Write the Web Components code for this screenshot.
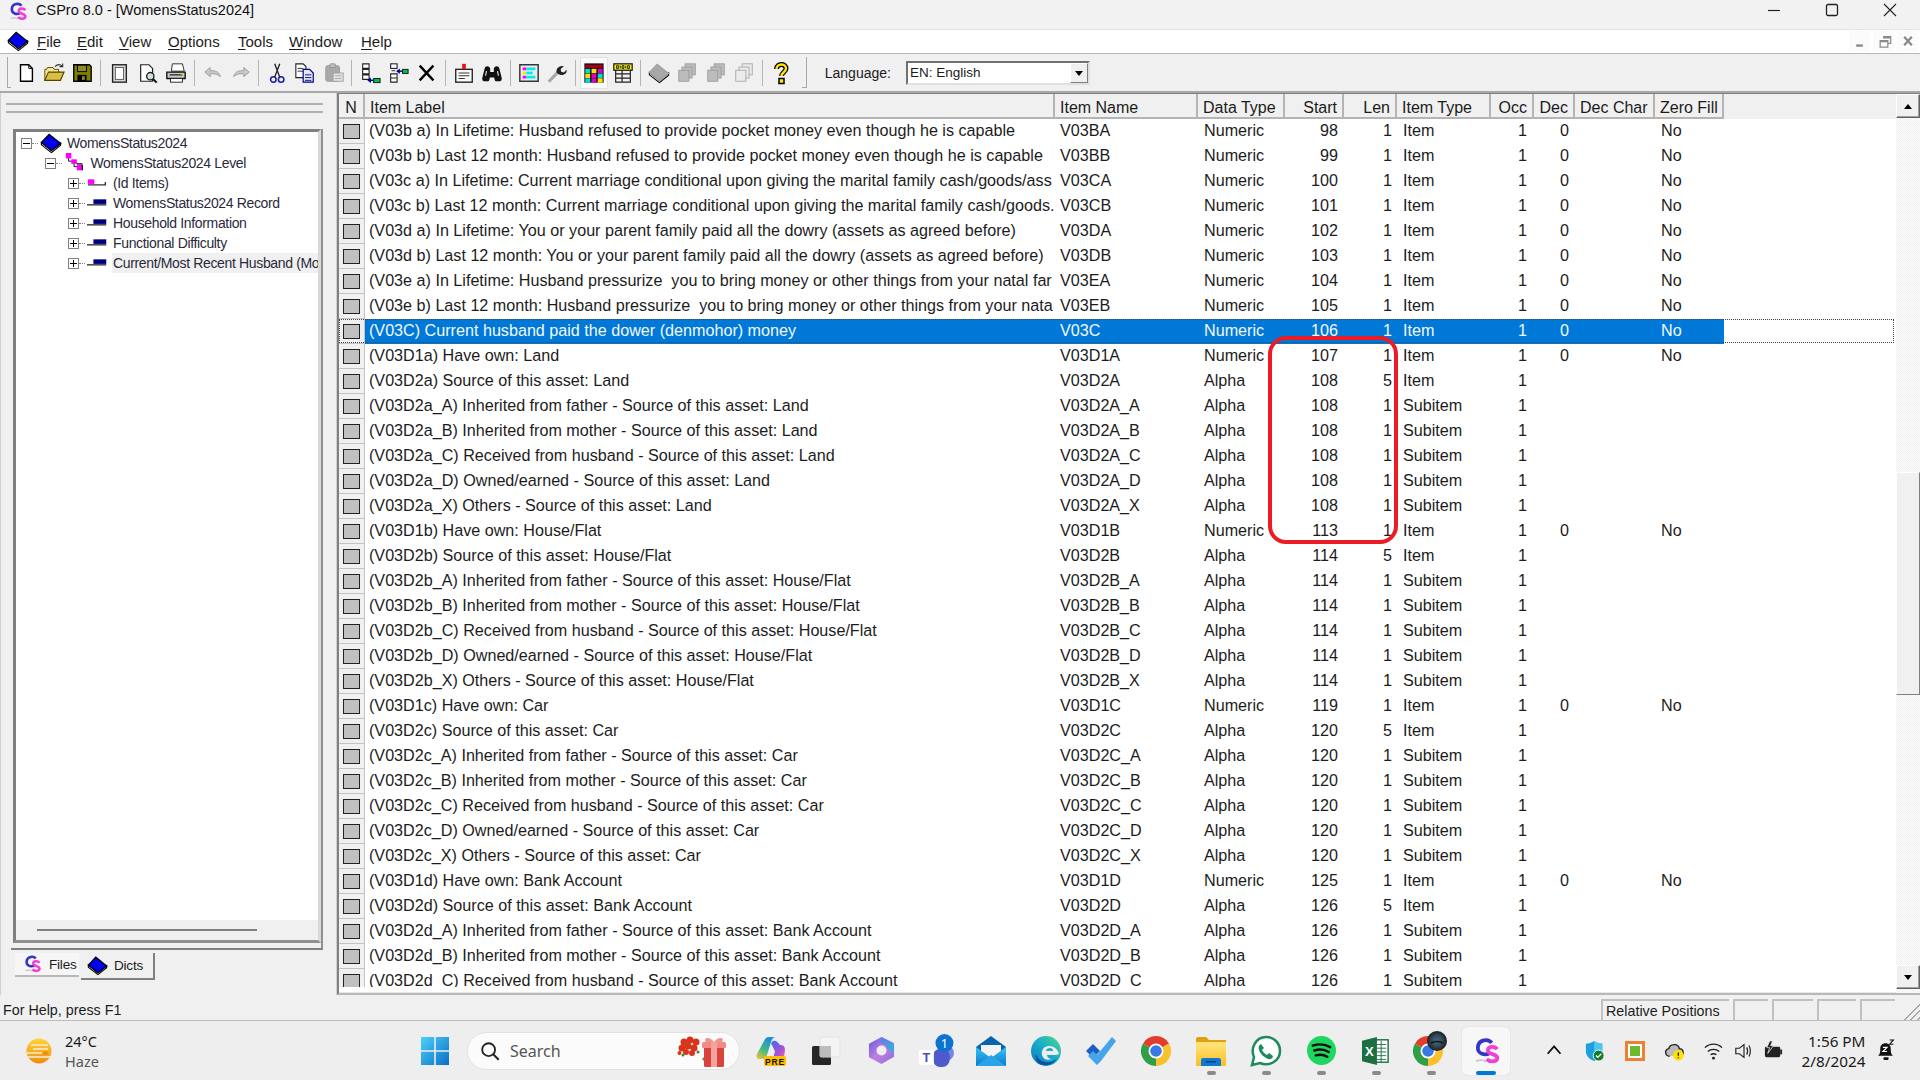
<!DOCTYPE html>
<html>
<head>
<meta charset="utf-8">
<title>CSPro 8.0</title>
<style>
html,body{margin:0;height:100%;overflow:hidden}
body{width:1920px;height:1080px;display:flex;flex-direction:column;background:#f0f0f0;font-family:"Liberation Sans",Arial,sans-serif;color:#1c1c1c}
</style>
</head>
<body>
<title-bar></title-bar>
<menu-bar></menu-bar>
<tool-bar></tool-bar>
<main-area>
  <side-panel></side-panel>
  <dict-grid></dict-grid>
</main-area>
<status-bar></status-bar>
<task-bar></task-bar>

<script>
const BOOK=(a,b,c)=>`<path d="M1.5 11.5v2.5l11 8.5 10-8v-2.5l-10 8z" fill="${c}" stroke="#000" stroke-width="1.2"/><path d="M1.5 11.5L10 2.5l12.5 10-10 8z" fill="${a}" stroke="${b}" stroke-width="1.4"/>`;
const STACK=(f,s)=>`<rect x="10" y="2" width="11" height="12" fill="${f}" stroke="${s}"/><rect x="6.500" y="5.500" width="11" height="12" fill="${f}" stroke="${s}"/><rect x="3" y="9" width="11" height="12" fill="${f}" stroke="${s}"/>`;
const CELL=(x,y,c)=>`<rect x="${x}" y="${y}" width="5.300" height="4.700" fill="${c}"/>`;
const CHROME=`<path d="M15 15L2 7.500A15 15 0 0 1 28 7.500z" fill="#e33b2e"/><path d="M15 15L28 7.500A15 15 0 0 1 15 30z" fill="#fbc02d"/><path d="M15 15L15 30A15 15 0 0 1 2 7.500z" fill="#2f9e44"/><circle cx="15" cy="15" r="7.500" fill="#fff"/><circle cx="15" cy="15" r="5.800" fill="#3b78e7"/>`;
const CSLOGO=`<path d="M16.500 5.500C14 2 6 2.500 5.500 9c-.4 5.500 6 7 9.500 4.500" fill="none" stroke="#3535c8" stroke-width="3"/><path d="M21 10.500c-2-2.500-7.500-2.500-7.500 1 0 3.500 7.500 2.500 7.500 6 0 3.500-6 3.500-8.500 1" fill="none" stroke="#f040d8" stroke-width="3"/><path d="M4 20c3-1 6-1 8 .5" fill="none" stroke="#c8c8c8" stroke-width="1.500"/>`;

const ICONS={
 book:BOOK('#0000f0','#000','#fff'),
 cslogo:CSLOGO,
 level:`<path d="M5 4v6h6v6h6" fill="none" stroke="#000"/><rect x="2" y="1" width="6" height="6" fill="#f0f"/><rect x="8" y="8" width="6" height="5" fill="#f0f"/><rect x="14" y="14" width="6" height="6" fill="#f0f"/><path d="M14 13h6M20 14v6" stroke="#000" stroke-width="1.200"/>`,
 idrec:`<rect x="1" y="8" width="7" height="5" fill="#f0f"/><path d="M1 14h19v-3" fill="none" stroke="#333" stroke-width="1.500"/>`,
 rec:`<rect x="7" y="8" width="14" height="5" fill="#000080"/><path d="M0 14h21" stroke="#333" stroke-width="1.500"/>`,
 new:`<path d="M6 3h9l4 4v14H6z" fill="#fff" stroke="#000" stroke-width="1.500"/><path d="M15 3v4h4" fill="none" stroke="#000"/>`,
 open:`<path d="M2 20V8h2l1-2h6l1 2h5v3" fill="#f6e890" stroke="#554400"/><path d="M2 20l4-9h17l-4 9z" fill="#d8c040" stroke="#554400" stroke-width="1.200"/><path d="M13 5q4-4 8-.5M21.500 1.500v3.500h-3.500" fill="none" stroke="#333" stroke-width="1.200"/>`,
 save:`<path d="M3 3h17l2 2v16H3z" fill="#808000" stroke="#000" stroke-width="1.500"/><rect x="7" y="3.500" width="10" height="7" fill="#8c8c20" stroke="#000"/><rect x="7" y="14" width="10" height="7" fill="#000"/><rect x="12" y="15.500" width="3" height="4" fill="#8c8c20"/>`,
 page:`<rect x="5" y="3" width="15" height="19" fill="#d8d8d8" stroke="#222" stroke-width="1.500"/><rect x="8" y="6" width="9" height="13" fill="#fff" stroke="#555"/>`,
 preview:`<path d="M4 3h9l4 4v14H4z" fill="#fff" stroke="#222" stroke-width="1.300"/><circle cx="14.500" cy="15.500" r="4" fill="#cfe0e0" stroke="#222" stroke-width="1.500"/><path d="M17.500 18.500l4 4" stroke="#111" stroke-width="2.200"/>`,
 print:`<path d="M8 2h11l2 8H7z" fill="#fff" stroke="#222"/><path d="M2 11h20v7H2z" fill="#c8c8c8" stroke="#111" stroke-width="1.500"/><path d="M5 14h14" stroke="#333" stroke-width="1.500"/><rect x="6" y="18" width="13" height="4" fill="#fff" stroke="#222"/><rect x="17" y="12" width="3" height="1.500" fill="#ee0"/>`,
 undo:`<path d="M3 11l6-5v3.500c5-.5 10 1 11 6.500-3-3-7-3.500-11-3v3z" fill="#c8c8c8" stroke="#9c9c9c"/>`,
 redo:`<path d="M21 11l-6-5v3.500c-5-.5-10 1-11 6.500 3-3 7-3.500 11-3v3z" fill="#c8c8c8" stroke="#9c9c9c"/>`,
 cut:`<circle cx="8" cy="19" r="3" fill="none" stroke="#1c1ca8" stroke-width="1.700"/><circle cx="16.500" cy="19" r="3" fill="none" stroke="#1c1ca8" stroke-width="1.700"/><path d="M9.500 16.500L15 2M15 16.500L9.500 2" stroke="#222" stroke-width="1.500"/>`,
 copy:`<path d="M2 2h8l3 3v12H2z" fill="#fff" stroke="#222" stroke-width="1.200"/><path d="M4 7h6M4 10h6" stroke="#222"/><path d="M10 8h7l4 4v10H10z" fill="#e4e8f8" stroke="#00008a" stroke-width="1.300"/><path d="M12 14h7M12 17h7M12 20h7" stroke="#00008a"/>`,
 paste:`<rect x="3" y="4" width="15" height="17" rx="2" fill="#a8a8a8" stroke="#989898"/><rect x="7.500" y="2" width="6" height="4" rx="1" fill="#c0c0c0" stroke="#909090"/><rect x="11" y="12" width="11" height="9" fill="#e2e2e2" stroke="#a0a0a0"/><path d="M13 15h7M13 18h7" stroke="#aaa"/>`,
 addafter:`<path d="M4 2h7v5H4zM4 8h7v5H4zM4 14h7v5H4z" fill="#fff" stroke="#222" stroke-width="1.200"/><path d="M17 20h-7" stroke="#0000a0" stroke-width="1.600"/><path d="M13 17v6l-4-3z" fill="#0000a0"/><rect x="16" y="18" width="7" height="4.500" fill="#00c050" stroke="#111"/>`,
 addbefore:`<rect x="4" y="2" width="7" height="5" fill="#fff" stroke="#222" stroke-width="1.200"/><path d="M4 13h7v4.500H4zM4 17.500h7V22H4z" fill="#fff" stroke="#222" stroke-width="1.200"/><path d="M5 9.500h4" stroke="#222"/><path d="M11 10h8" stroke="#0000a0" stroke-width="1.600"/><path d="M14 7v6l-4-3z" fill="#0000a0"/><rect x="17" y="8" width="6" height="4.500" fill="#00c050" stroke="#111"/>`,
 del:`<path d="M4 4l15 16M19 4L4 20" stroke="#000" stroke-width="2.600"/>`,
 note:`<rect x="3" y="8" width="18" height="14" fill="#fff" stroke="#222" stroke-width="1.500"/><rect x="10" y="2" width="4" height="6" fill="#e81010"/><path d="M6 12h12M6 15h12M6 18h7" stroke="#222"/>`,
 find:`<path d="M3 21c-2-1-2-3-1-6l2-8c.5-3 5-3 6 0v4h4V7c1-3 5.500-3 6 0l2 8c1 3 1 5-1 6h-5c-1-.5-1.500-2-1.500-4h-5c0 2-.5 3.500-1.500 4z" fill="#111"/><path d="M5 15l1-5M18 10l1 5" stroke="#eee" stroke-width="1.200"/>`,
 fields:`<rect x="2" y="3" width="20" height="18" fill="#ececec" stroke="#333" stroke-width="1.600"/><rect x="5" y="6" width="4" height="3" fill="#f0f"/><rect x="9" y="6" width="10" height="3" fill="#0ee"/><rect x="5" y="10.500" width="4" height="3" fill="#ee0"/><rect x="9" y="10.500" width="7" height="3" fill="#0ee"/><rect x="5" y="15" width="4" height="3" fill="#f0f"/><rect x="9" y="15" width="10" height="3" fill="#0ee"/>`,
 wrench:`<path d="M3 21.500L13 11" stroke="#a8a8a8" stroke-width="3.400"/><path d="M12 12c-2-4 2-9 7.500-7.500l-3.500 3 .5 3 3 1 3-3c1 5-5.500 8-10.500 3.500z" fill="#222"/>`,
 sheet:`<rect x="1.500" y="1.500" width="21" height="21" fill="#111"/><rect x="2.500" y="3" width="19" height="3.500" fill="#a00018"/>`+CELL(2.5,7.5,'#00dcdc')+CELL(9.3,7.5,'#ffe000')+CELL(16.1,7.5,'#e000c0')+CELL(2.5,12.7,'#ffe000')+CELL(9.3,12.7,'#e000c0')+CELL(16.1,12.7,'#00dcdc')+CELL(2.5,17.8,'#00dcdc')+CELL(9.3,17.8,'#e000c0')+CELL(16.1,17.8,'#ffe000'),
 table:`<rect x="2" y="2" width="20" height="7" fill="#f4f020" stroke="#111" stroke-width="1.300"/><path d="M5 4h2v3H5zM11 4h2v3h-2zM17 4h2v3h-2z" fill="none" stroke="#111"/><path d="M9 4v3M15 4v3" stroke="#111"/><path d="M4 9v13h16V9M4 13h16M4 17.500h16M11 9v13" fill="none" stroke="#222" stroke-width="1.300"/>`,
 graybook:BOOK('#a8a8a8','#a0a0a0','#e8e8e8'),
 graystack:STACK('#bcbcbc','#9c9c9c'),
 linestack:STACK('#ececec','#a8a8a8'),
 help:`<path d="M7.500 8c0-6 9.500-6 9.500-.5 0 3.500-4.500 4-4.500 7.500" fill="none" stroke="#000" stroke-width="5"/><path d="M7.500 8c0-6 9.500-6 9.500-.5 0 3.500-4.500 4-4.500 7.500" fill="none" stroke="#ffe600" stroke-width="2.400"/><rect x="10" y="17.500" width="5" height="5" fill="#ffe600" stroke="#000" stroke-width="1.500"/>`,
 mdimin:`<rect x="6" y="14" width="7" height="2.500" fill="#8a8a8a"/>`,
 mdirest:`<path d="M9 6h8v7h-3M6 10h8v7H6z" fill="none" stroke="#8a8a8a" stroke-width="1.300"/><path d="M9 7h8M6 11h8" stroke="#8a8a8a" stroke-width="1.500"/>`,
 mdiclose:`<path d="M6 6l8 9M14 6l-8 9" stroke="#8a8a8a" stroke-width="2.400"/>`,
 weather:`<defs><linearGradient id="g" x1="0" y1="0" x2="0" y2="1"><stop offset="0" stop-color="#ffd33a"/><stop offset="1" stop-color="#f28a10"/></linearGradient></defs><circle cx="15" cy="15" r="12.500" fill="url(#g)"/><path d="M1 17h17M4 21h22M7 9h17M9 13h15" stroke="#f7dfa8" stroke-width="2"/><rect x="19" y="15.500" width="5" height="3" rx="1.500" fill="#e88b10"/>`,
 windows:`<defs><linearGradient id="g" x1="0" y1="0" x2="1" y2="1"><stop offset="0" stop-color="#4dd0f7"/><stop offset="1" stop-color="#0a6fc8"/></linearGradient></defs><path d="M1 1h13.200v13.200H1zM15.800 1H29v13.200H15.800zM1 15.800h13.200V29H1zM15.800 15.800H29V29H15.800z" fill="url(#g)"/>`,
 search:`<circle cx="10.500" cy="10.500" r="7" fill="none" stroke="#222" stroke-width="2"/><path d="M15.500 15.500l6 6" stroke="#222" stroke-width="2.200"/>`,
 gift:`<path d="M26 24l5 5" stroke="#5a9a3a" stroke-width="3"/><g fill="#d8341c"><circle cx="7" cy="8" r="3.500"/><circle cx="13" cy="6" r="3.500"/><circle cx="19" cy="8" r="3.500"/><circle cx="5" cy="14" r="3.500"/><circle cx="11" cy="12" r="3.500"/><circle cx="17" cy="14" r="3.500"/><circle cx="9" cy="18" r="3"/><circle cx="15" cy="19" r="3"/><circle cx="2.500" cy="19" r="2"/></g><g fill="#3f8a2e"><circle cx="21" cy="18" r="1.500"/><circle cx="6" cy="21" r="1.500"/></g><rect x="27" y="11" width="20" height="22" rx="1.500" fill="#d8443c"/><rect x="25" y="8" width="24" height="6" rx="1.500" fill="#f08c84"/><rect x="34" y="8" width="6" height="25" fill="#f4a49c"/><path d="M37 8c-6-7-11-3-8 0zM37 8c6-7 11-3 8 0z" fill="#f0948c"/>`,
 copilot:`<defs><linearGradient id="a" x1="0" y1="1" x2=".5" y2="0"><stop offset="0" stop-color="#f4c430"/><stop offset=".5" stop-color="#42b883"/><stop offset="1" stop-color="#1a8fe0"/></linearGradient><linearGradient id="b" x1="0" y1="0" x2="1" y2="1"><stop offset="0" stop-color="#2878f0"/><stop offset=".6" stop-color="#a650d8"/><stop offset="1" stop-color="#f070a0"/></linearGradient></defs><path d="M8 5c1-2 2-4 5-4h7c-3 0-4 2-5 5l-4 13c-1 3-3 4-5 4H3c-2 0-3-2-2-5z" fill="url(#a)"/><path d="M15 8c1-3 2-4 5-3 2 1 3 3 4 4 3 0 5 1 5 5l-1 7c-1 2-3 3-5 3H13c3 0 4-2 5-5l1-4c-1-1-2-5-4-7z" fill="url(#b)"/><rect x="8" y="20" width="22" height="10" rx="2" fill="#ffc000"/><text x="19" y="28.500" text-anchor="middle" font-family="Liberation Sans,sans-serif" font-weight="700" font-size="8.500" letter-spacing=".8" fill="#111">PRE</text>`,
 taskview:`<rect x="1" y="10" width="19" height="19" rx="1.500" fill="#262626"/><rect x="9" y="1" width="20" height="20" rx="1.500" fill="#f4f4f4" stroke="#e2e2e2"/><rect x="9" y="10" width="11" height="11" fill="#bdbdbd"/>`,
 m365:`<defs><linearGradient id="a" x1="0" y1="0" x2="1" y2="1"><stop offset="0" stop-color="#5a5be0"/><stop offset=".5" stop-color="#c080e0"/><stop offset="1" stop-color="#8a6ce0"/></linearGradient><linearGradient id="b" x1="0" y1="0" x2="1" y2="1"><stop offset="0" stop-color="#6a78e8"/><stop offset="1" stop-color="#38b0e0"/></linearGradient></defs><path d="M14 1L27 7.500v14L14 29 1 22V8z" fill="url(#a)"/><path d="M14 1l13 6.500v10l-7-4-1-3.500-7-4z" fill="url(#b)"/><circle cx="14" cy="15" r="5.200" fill="#eee"/>`,
 teams:`<circle cx="26" cy="17" r="7" fill="#7b83eb"/><rect x="13" y="13" width="16" height="17" rx="7" fill="#5059c9"/><rect x="0" y="14" width="14" height="14" fill="#fff"/><text x="7" y="25" text-anchor="middle" font-family="Liberation Sans,sans-serif" font-weight="700" font-size="12" fill="#4a50b8">T</text><circle cx="24" cy="7.500" r="8.500" fill="#0c74d0"/><text x="24" y="12" text-anchor="middle" font-family="Noto Sans,sans-serif" font-size="12" fill="#fff">1</text>`,
 mail:`<defs><linearGradient id="a" x1="0" y1="0" x2="0" y2="1"><stop offset="0" stop-color="#36c4f4"/><stop offset="1" stop-color="#0f78d0"/></linearGradient></defs><path d="M15 0L30 11v19H0V11z" fill="#0a63b0"/><path d="M5 9h20v8l-10 7-10-7z" fill="#f3f3f3"/><path d="M0 11l15 11 15-11v19H0z" fill="url(#a)"/><path d="M0 30l15-11 15 11z" fill="#2aa4e8"/>`,
 edge:`<defs><linearGradient id="a" x1="0" y1="1" x2="1" y2="0"><stop offset="0" stop-color="#0c78c8"/><stop offset=".55" stop-color="#1ab0c8"/><stop offset="1" stop-color="#52d888"/></linearGradient></defs><circle cx="15" cy="15" r="15" fill="url(#a)"/><path d="M26 22c-3 6-9 8-14 7-6-1-8-5-7-11 2 6 8 9 13 8 3 0 6-2 8-4z" fill="#0c53a0"/><path d="M11 19c-1-5 2-9 7-9 5 0 8 3 10 7 0 2-3 2-8 2h-4c0 2 2 4 5 4-5 2-9 0-10-4z" fill="#eee"/><path d="M15 15c0-2 2-3 4-3 2 0 3 1 3 3z" fill="#27a6c6"/>`,
 todo:`<path d="M0 15l7-7 7 7-7 7z" fill="#1b5ec4"/><path d="M11 29L2 20l5-5 4 4L26 1l4 4-15 20z" fill="#45a4ec"/>`,
 chrome:CHROME,
 folder:`<path d="M0 3c0-1 1-2 2-2h8l3 3h17v6H0z" fill="#e0a010"/><defs><linearGradient id="a" x1="0" y1="0" x2="0" y2="1"><stop offset="0" stop-color="#ffe680"/><stop offset="1" stop-color="#fbbe20"/></linearGradient></defs><rect x="0" y="6" width="30" height="24" rx="1" fill="url(#a)"/><path d="M5 30v-6c0-1 1-2 2-2h16c1 0 2 1 2 2v6z" fill="#0f78d0"/><rect x="10" y="25" width="10" height="1.500" fill="#063e78"/>`,
 whatsapp:`<path d="M1 29l2-8C-1 12 5 1 15 1c8 0 14 6 14 14 0 10-11 16-20 12z" fill="#fff" stroke="#1f8a5c" stroke-width="2.500"/><path d="M10 8c-2 1-3 3-2 6 2 5 5 7 9 9 3 1 5-1 5-3l-4-3-2 2c-2-1-4-3-5-5l2-2z" fill="#1f8a5c"/>`,
 spotify:`<circle cx="15" cy="15" r="15" fill="#1ed760"/><path d="M6 10c6-2 13-1.500 18 1.500M7.500 15c5-1.500 11-1 15 1.500M9 20c4-1 9-.5 12 1.500" fill="none" stroke="#111" stroke-width="2.500" stroke-linecap="round"/>`,
 excel:`<rect x="12" y="3" width="16" height="24" fill="#fff" stroke="#1d6f42" stroke-width="1.500"/><path d="M16 8h10M16 12h10M16 16h10M16 20h10M16 24h10M20.500 4v23" stroke="#1d6f42"/><path d="M0 4l16-4v30L0 26z" fill="#1d6f42"/><text x="8" y="20" text-anchor="middle" font-family="Liberation Sans,sans-serif" font-weight="700" font-size="14" fill="#fff">X</text>`,
 chromeavatar:CHROME+`<defs><radialGradient id="a"><stop offset="0" stop-color="#3f6f86"/><stop offset=".55" stop-color="#334b58"/><stop offset="1" stop-color="#1c1c1c"/></radialGradient></defs><circle cx="24" cy="5" r="10" fill="url(#a)"/><path d="M18 7q6-3 12 0" stroke="#111" stroke-width="1.500" fill="none"/>`,
 up:`<path d="M4 15l7-8 7 8" fill="none" stroke="#111" stroke-width="2"/>`,
 shield:`<path d="M10 1c3 2 6 3 9 3v8c0 6-4 9-9 11-5-2-9-5-9-11V4c3 0 6-1 9-3z" fill="#18a0e0"/><path d="M10 1c3 2 6 3 9 3v8H10z" fill="#4cc4f0"/><circle cx="15" cy="17" r="6" fill="#107c30" stroke="#fff"/><path d="M12 17l2 2 4-4" fill="none" stroke="#fff" stroke-width="1.500"/>`,
 square:`<rect x="1.500" y="1.500" width="17" height="17" fill="#fff" stroke="#f08030" stroke-width="3"/><rect x="5" y="5" width="10" height="10" fill="#70b82c"/>`,
 cloud:`<path d="M6 17c-5 0-6-7-1-8 1-5 10-6 11 0 3 0 4 2 4 4v2" fill="#bbb" stroke="#222" stroke-width="1.500"/><circle cx="15" cy="16" r="5.500" fill="#ffe000"/><path d="M15 13v3.500M15 18v1" stroke="#111" stroke-width="1.300"/>`,
 wifi:`<path d="M2 8c5-5 13-5 18 0M5 12c3-3 9-3 12 0M8 15.500c2-1.500 4-1.500 6 0" fill="none" stroke="#222" stroke-width="1.400"/><circle cx="11" cy="19" r="1.500" fill="#222"/>`,
 speaker:`<path d="M2 9h4l5-4v14l-5-4H2z" fill="none" stroke="#222" stroke-width="1.300"/><path d="M14 8q2 4 0 8M16.500 6q3 6 0 12" fill="none" stroke="#222" stroke-width="1.300"/>`,
 battery:`<rect x="2" y="7" width="16" height="11" rx="1.500" fill="#222"/><rect x="18" y="10" width="2" height="5" fill="#222"/><path d="M7 1L4 8h3l-2 6 6-8H8l2-5z" fill="#222" stroke="#eee" stroke-width=".8"/>`,
 bell:`<path d="M3 16c2-2 2-4 2-7 0-3 2-5 5-5s5 2 5 5c0 3 0 5 2 7z" fill="#111"/><rect x="8" y="17.500" width="5" height="2.500" rx="1" fill="#111"/><path d="M7.500 8h4l-4 4h4" fill="none" stroke="#fff" stroke-width="1.100"/><path d="M14 1h3.500l-3.500 4h3.500" fill="none" stroke="#111" stroke-width="1.100"/>`
};
const BOXES={gift:'0 0 52 34',copilot:'0 0 30 30',windows:'0 0 30 30',weather:'0 0 30 30',taskview:'0 0 30 30',m365:'0 0 28 30',teams:'0 0 33 30',mail:'0 0 30 30',edge:'0 0 30 30',todo:'0 0 30 30',chrome:'0 0 30 30',chromeavatar:'0 0 36 30',folder:'0 0 30 30',whatsapp:'0 0 30 30',spotify:'0 0 30 30',excel:'0 0 30 30',mdimin:'0 0 20 22',mdirest:'0 0 20 22',mdiclose:'0 0 20 22',shield:'0 0 22 24',square:'0 0 20 20',cloud:'0 0 22 22',wifi:'0 0 22 22',speaker:'0 0 22 24',battery:'0 0 22 22',bell:'0 0 20 22',cslogo:'0 0 24 24'};

class AppIcon extends HTMLElement{
    connectedCallback(){
        const n=this.getAttribute('name'), w=this.getAttribute('size')||24, h=this.getAttribute('height')||w;
        this.attachShadow({mode:'open'}).innerHTML=`<style>:host{display:inline-flex;flex:none}svg{display:block;overflow:visible}</style>
        <svg width="${w}" height="${h}" viewBox="${BOXES[n]||'0 0 24 24'}">${ICONS[n]}</svg>`;
    }
}
customElements.define('app-icon',AppIcon);

class TitleBar extends HTMLElement{
    connectedCallback(){
        this.attachShadow({mode:'open'}).innerHTML=`<style>
        :host{display:flex;align-items:flex-start;height:29px;flex:none;box-sizing:border-box;background:#f2f2f2;padding:1px 0 0 7px;font-size:14.500px}
        span{margin:1px 0 0 8px;white-space:pre;color:#111}
        .ctl{margin-left:auto;display:flex}
        .b{width:58px;height:18px;display:flex;align-items:center;justify-content:center}
        svg{display:block}
        </style>
        <app-icon name="cslogo" size="21"></app-icon><span>CSPro 8.0 - [WomensStatus2024]</span>
        <div class="ctl" style="padding-right:1px">
          <div class="b"><svg width="14" height="14"><path d="M1 7.500h12" stroke="#222" stroke-width="1.200"/></svg></div>
          <div class="b"><svg width="14" height="14"><rect x="1.500" y="1.500" width="11" height="11" rx="1.500" fill="none" stroke="#222" stroke-width="1.300"/></svg></div>
          <div class="b"><svg width="14" height="14"><path d="M1 1l12 12M13 1L1 13" stroke="#222" stroke-width="1.100"/></svg></div>
        </div>`;
    }
}
customElements.define('title-bar',TitleBar);

class MenuBar extends HTMLElement{
    connectedCallback(){
        const items=[['F','ile',40],['E','dit',42],['V','iew',49],['O','ptions',70],['T','ools',51],['W','indow',72],['H','elp',40]];
        this.attachShadow({mode:'open'}).innerHTML=`<style>
        :host{display:flex;align-items:center;height:25px;flex:none;background:#fff;border-top:1px solid #e4e4e4;border-bottom:1px solid #b8b8b8;box-sizing:border-box;padding:0 0 1px 7px;font-size:15px}
        u{text-decoration-thickness:1px;text-underline-offset:2px}
        .m{display:flex;margin-left:8px}
        .m span{white-space:nowrap}
        .mdi{margin-left:auto;display:flex;gap:3px;padding-right:2px}
        .mdi div{width:21px;height:21px;background:#fbfbfb;display:flex;align-items:center;justify-content:center}
        </style>
        <app-icon name="book" size="22"></app-icon>
        <div class="m">${items.map(i=>`<span style="width:${i[2]}px"><u>${i[0]}</u>${i[1]}</span>`).join('')}</div>
        <div class="mdi"><div><app-icon name="mdimin" size="20" height="21"></app-icon></div><div><app-icon name="mdirest" size="20" height="21"></app-icon></div><div><app-icon name="mdiclose" size="20" height="21"></app-icon></div></div>`;
    }
}
customElements.define('menu-bar',MenuBar);

class ToolBar extends HTMLElement{
    connectedCallback(){
        const groups=[['new','open','save',8.5],['page','preview','print',8],['undo','redo',7.5],['cut','copy','paste',8],['addafter','addbefore','del',8.5],['note','find',8.5],['fields','wrench',8.5],['sheet','table',8],['graybook','graystack','graystack','linestack',8],['help',0]];
        let html='';
        for(const g of groups){
            const gap=g[g.length-1];
            for(const n of g.slice(0,-1)) html+=`<div class="b${n=='sheet'?' on':''}"><app-icon name="${n}" size="${n=='help'?24:22}"></app-icon></div>`;
            if(gap) html+=`<div class="s" style="width:${gap}px"></div>`;
        }
        this.attachShadow({mode:'open'}).innerHTML=`<style>
        :host{display:flex;align-items:center;height:39px;flex:none;box-sizing:border-box;background:#f0f0f0;border-bottom:2px solid #a8a8a8;padding-left:7px;font-size:14px}
        .grip{width:3px;height:30px;border-left:1px solid #a8a8a8;border-bottom:1px solid #a8a8a8;margin-right:.5px;flex:none}
        .b{width:28.400px;height:32px;flex:none;display:flex;align-items:center;justify-content:center;box-sizing:border-box}
        .on{background:#fafafa;border:1px solid #e2e2e2}
        .s{flex:none;height:26px;display:flex;justify-content:center;position:relative}
        .s::after{content:"";width:1px;background:#b4b4b4}
        .grip2{width:4px;height:30px;border-right:1px solid #a8a8a8;border-bottom:1px solid #a8a8a8;margin:0 18px 0 7px;flex:none}
        .combo{width:184px;height:24px;box-sizing:border-box;margin-left:15px;border:2px solid;border-color:#707070 #e0e0e0 #e0e0e0 #707070;background:#fff;display:flex;align-items:center;padding-left:2px;justify-content:space-between;flex:none;font-size:13.500px}
        .arr{width:18px;height:20px;background:#f0f0f0;border:1px solid;border-color:#fff #808080 #808080 #fff;box-sizing:border-box;display:flex;align-items:center;justify-content:center}
        .arr::after{content:"";border:4px solid transparent;border-top:5px solid #000;margin-top:5px}
        </style>
        <div class="grip"></div>${html}<div class="grip2"></div>
        <span>Language:</span>
        <div class="combo"><span>EN: English</span><div class="arr"></div></div>`;
    }
}
customElements.define('tool-bar',ToolBar);

class MainArea extends HTMLElement{
    connectedCallback(){
        this.attachShadow({mode:'open'}).innerHTML=`<style>:host{display:flex;flex:none;height:902px;background:#f0f0f0}</style><slot></slot>`;
    }
}
customElements.define('main-area',MainArea);

class TreeRow extends HTMLElement{
    connectedCallback(){
        const lv=+this.getAttribute('level'), t=this.getAttribute('toggle'), sel=this.hasAttribute('selected');
        this.attachShadow({mode:'open'}).innerHTML=`<style>
        :host{display:flex;align-items:center;height:20px;padding-left:${5+lv*23.5}px;font-size:14px;white-space:nowrap;overflow:hidden}
        .t{width:11px;height:11px;box-sizing:border-box;border:1px solid #808080;background:#fff;position:relative;flex:none}
        .t::before{content:"";position:absolute;left:1px;right:1px;top:4px;height:1px;background:#000}
        .plus::after{content:"";position:absolute;top:1px;bottom:1px;left:4px;width:1px;background:#000}
        .d{width:6px;border-top:1px dotted #808080;margin-right:2px;flex:none}
        span{margin-left:${lv==0?4:lv==1?4:3}px;color:#2a2a3a;padding:0 1px;line-height:20px;flex:1;overflow:hidden;letter-spacing:-.35px;background:${sel?'#f0f0f0':'none'}}
        </style>
        <div class="t ${t}"></div><div class="d"></div><app-icon name="${this.getAttribute('icon')}" size="22"></app-icon><span>${this.getAttribute('label')}</span>`;
    }
}
customElements.define('tree-row',TreeRow);

class SidePanel extends HTMLElement{
    connectedCallback(){
        this.attachShadow({mode:'open'}).innerHTML=`<style>
        :host{display:flex;flex-direction:column;width:337px;flex:none;box-sizing:border-box;border-right:1px solid #d0d0d0;border-left:1px solid #cfcfcf}
        .grip{height:6px;margin:10px 13px 16px 5px;border-top:2px solid #b0b0b0;border-bottom:2px solid #b0b0b0;flex:none}
        .frame{flex:1;display:flex;flex-direction:column;margin:0 13px 0 10px;border-bottom:2px solid #808080;border-right:2px solid #909090;padding:0 0 5px 2px;min-height:0}
        .box{flex:1;display:flex;flex-direction:column;border:3px solid;border-color:#808080 #d8d8d8 #909090 #808080;min-height:0}
        .tree{flex:1;background:#fff;padding-top:1px}
        .hs{height:20px;flex:none;display:flex;align-items:center;padding-left:21px}
        .hs div{width:220px;height:2px;background:#808080}
        .tabs{height:45px;flex:none;display:flex;padding:3px 0 0 14px;align-items:flex-start;font-size:13.500px;letter-spacing:-.2px;box-sizing:border-box}
        .tab{display:flex;align-items:center;box-sizing:border-box;height:24px;width:64px;border-bottom:2px solid #b8b8b8;padding-left:7px;gap:7px;background:#f6f6f6}
        .tab.on{height:27px;width:74px;margin-left:2px;background:#f0f0f0;border-bottom:2px solid #808080;border-right:2px solid #808080;padding-left:6px;gap:6px}
        </style>
        <div class="grip"></div>
        <div class="frame"><div class="box">
          <div class="tree">
            <tree-row level="0" toggle="minus" icon="book" label="WomensStatus2024"></tree-row>
            <tree-row level="1" toggle="minus" icon="level" label="WomensStatus2024 Level"></tree-row>
            <tree-row level="2" toggle="plus" icon="idrec" label="(Id Items)"></tree-row>
            <tree-row level="2" toggle="plus" icon="rec" label="WomensStatus2024 Record"></tree-row>
            <tree-row level="2" toggle="plus" icon="rec" label="Household Information"></tree-row>
            <tree-row level="2" toggle="plus" icon="rec" label="Functional Difficulty"></tree-row>
            <tree-row level="2" toggle="plus" icon="rec" selected label="Current/Most Recent Husband (Mo"></tree-row>
          </div>
          <div class="hs"><div></div></div>
        </div></div>
        <div class="tabs">
          <div class="tab"><app-icon name="cslogo" size="20"></app-icon>Files</div>
          <div class="tab on"><app-icon name="book" size="21"></app-icon>Dicts</div>
        </div>`;
    }
}
customElements.define('side-panel',SidePanel);

const ROWS=[
 ['(V03b a) In Lifetime: Husband refused to provide pocket money even though he is capable','V03BA',98],
 ['(V03b b) Last 12 month: Husband refused to provide pocket money even though he is capable','V03BB',99],
 ['(V03c a) In Lifetime: Current marriage conditional upon giving the marital family cash/goods/ass','V03CA',100],
 ['(V03c b) Last 12 month: Current marriage conditional upon giving the marital family cash/goods.','V03CB',101],
 ['(V03d a) In Lifetime: You or your parent family paid all the dowry (assets as agreed before)','V03DA',102],
 ['(V03d b) Last 12 month: You or your parent family paid all the dowry (assets as agreed before)','V03DB',103],
 ['(V03e a) In Lifetime: Husband pressurize  you to bring money or other things from your natal far','V03EA',104],
 ['(V03e b) Last 12 month: Husband pressurize  you to bring money or other things from your nata','V03EB',105],
 ['(V03C) Current husband paid the dower (denmohor) money','V03C',106]
].map(r=>[r[0],r[1],'Numeric',r[2],1,'Item',1,0,'','No']);
function asset(l,what,start){
    const up=l.toUpperCase();
    ROWS.push([`(V03D1${l}) Have own: ${what}`,`V03D1${up}`,'Numeric',start,1,'Item',1,0,'','No']);
    ROWS.push([`(V03D2${l}) Source of this asset: ${what}`,`V03D2${up}`,'Alpha',start+1,5,'Item',1,'','','']);
    [['A','Inherited from father'],['B','Inherited from mother'],['C','Received from husband'],['D','Owned/earned'],['X','Others']].forEach(s=>{
        ROWS.push([`(V03D2${l}_${s[0]}) ${s[1]} - Source of this asset: ${what}`,`V03D2${up}_${s[0]}`,'Alpha',start+1,1,'Subitem',1,'','','']);
    });
}
asset('a','Land',107);asset('b','House/Flat',113);asset('c','Car',119);asset('d','Bank Account',125);

const COLS='26px 690px 143px 87px 59px 53px 94px 43px 41px 80px 69px';

class DictRow extends HTMLElement{
    connectedCallback(){
        const d=JSON.parse(this.getAttribute('data'));
        const pad=[4,5,6,0,0,6,0,0,0,6];
        const right=[0,0,0,6,5,0,7,6,0,0];
        const cells=d.map((v,i)=>`<div class="c" style="padding-left:${pad[i]}px;padding-right:${right[i]}px;text-align:${right[i]?'right':'left'}">${v}</div>`).join('');
        this.attachShadow({mode:'open'}).innerHTML=`<style>
        :host{display:grid;grid-template-columns:${COLS};height:25px;flex:none;position:relative;background:#fff;font-size:16.150px;color:#1c1c1c}
        :host([selected]){z-index:1}
        .n{background:#f0f0f0;border-bottom:1px solid #c4c4c4;border-right:1px solid #c4c4c4;display:flex;align-items:center;padding-left:4px;box-sizing:border-box}
        .n div{width:17px;height:15px;box-sizing:border-box;background:#c0c0c0;border:1.500px solid #222}
        .c{line-height:23.500px;height:25px;white-space:pre;overflow:hidden;box-sizing:border-box}
        :host([selected]) .c{background:#0078d7;color:#f4f8fc}
        :host([selected])::after{content:"";position:absolute;left:0;top:0;width:1555px;height:24px;box-sizing:border-box;border:1px dotted #444;pointer-events:none}
        </style><div class="n"><div></div></div>${cells}`;
    }
}
customElements.define('dict-row',DictRow);

class DictGrid extends HTMLElement{
    connectedCallback(){
        const heads=[['N','c'],['Item Label','l'],['Item Name','l'],['Data Type','l'],['Start','r'],['Len','r'],['Item Type','l'],['Occ','r'],['Dec','r'],['Dec Char','l'],['Zero Fill','l']];
        const root=this.attachShadow({mode:'open'});
        root.innerHTML=`<style>
        :host{flex:1;display:flex;position:relative;box-sizing:border-box;border-top:1px solid #808080;border-left:2px solid #808080;border-bottom:2px solid #b8b8b8;background:#fff;min-width:0}
        .t{flex:1;min-width:0;display:flex;flex-direction:column;padding-bottom:5px;border-bottom:1px solid #e8e8e8;box-sizing:border-box}
        .h{display:grid;grid-template-columns:${COLS} 1fr;height:25px;flex:none;background:#f0f0f0;font-size:16px}
        .h div{border-right:2px solid #b4b4b4;border-bottom:2px solid #b4b4b4;box-sizing:border-box;line-height:27px;height:25px;padding:0 5px;white-space:nowrap;overflow:hidden}
        .h .c{text-align:center;padding:0}.h .r{text-align:right}.h .l{text-align:left}
        .h .f{border:0}
        .b{flex:1;overflow:hidden;min-height:0;display:flex;flex-direction:column}
        .sb{width:24px;flex:none;display:flex;flex-direction:column;background:repeating-conic-gradient(#fff 0 25%,#eeeeee 0 50%) 0 0/2px 2px}
        .btn{height:24px;flex:none;box-sizing:border-box;background:#f0f0f0;border:1px solid;border-color:#fff #606060 #606060 #fff;box-shadow:inset -1px -1px 0 #a0a0a0;display:flex;align-items:center;justify-content:center}
        .up::after{content:"";border:4.500px solid transparent;border-bottom:5px solid #000;margin-bottom:4px}
        .dn::after{content:"";border:4.500px solid transparent;border-top:5px solid #000;margin-top:4px}
        .gap1{height:354px;flex:none}
        .thumb{height:223px;flex:none;box-sizing:border-box;background:#f0f0f0;border:1px solid;border-color:#fff #808080 #808080 #fff}
        .gap2{flex:1}
        .mark{position:absolute;left:929px;top:242px;width:130px;height:208px;box-sizing:border-box;border:4px solid #ec1c24;border-radius:18px;pointer-events:none;z-index:2}
        </style>
        <div class="t">
          <div class="h">${heads.map(h=>`<div class="${h[1]}">${h[0]}</div>`).join('')}<div class="f"></div></div>
          <div class="b"></div>
        </div>
        <div class="sb"><div class="btn up"></div><div class="gap1"></div><div class="thumb"></div><div class="gap2"></div><div class="btn dn" style="margin-bottom:4px"></div></div>
        <div class="mark"></div>`;
        const body=root.querySelector('.b');
        ROWS.forEach((r,i)=>{
            const e=document.createElement('dict-row');
            e.setAttribute('data',JSON.stringify(r));
            if(i==8) e.setAttribute('selected','');
            body.appendChild(e);
        });
    }
}
customElements.define('dict-grid',DictGrid);

class StatusBar extends HTMLElement{
    connectedCallback(){
        this.attachShadow({mode:'open'}).innerHTML=`<style>
        :host{display:flex;align-items:flex-end;height:25px;flex:none;box-sizing:border-box;background:#f0f0f0;padding-left:3px;font-size:14.300px;position:relative}
        .txt{align-self:center;margin-top:4px}
        .ps{margin-left:auto;display:flex;gap:4px;height:21px;padding-right:25px}
        .p{border:1px solid;border-width:2px 0 0 2px;border-color:#c0c0c0;box-sizing:border-box;line-height:20px;padding-left:3px}
        .grip{position:absolute;right:0;bottom:0;width:20px;height:20px;background:repeating-linear-gradient(135deg,transparent 0 3px,#a8a8a8 3px 4.500px);clip-path:polygon(100% 0,100% 100%,0 100%)}
        </style>
        <div class="txt">For Help, press F1</div>
        <div class="ps"><div class="p" style="width:128px">Relative Positions</div><div class="p" style="width:35px"></div><div class="p" style="width:41px"></div><div class="p" style="width:39px"></div><div class="p" style="width:35px"></div></div>
        <div class="grip"></div>`;
    }
}
customElements.define('status-bar',StatusBar);

class TaskIcon extends HTMLElement{
    connectedCallback(){
        const n=this.getAttribute('name'), w=this.getAttribute('w')||30;
        const box=BOXES[n].split(' '); const h=Math.round(w*box[3]/box[2]);
        this.attachShadow({mode:'open'}).innerHTML=`<style>
        :host{display:flex;align-items:center;justify-content:center;width:55px;height:59px;flex:none;position:relative}
        .tile{display:flex;align-items:center;justify-content:center}
        :host([active]) .tile{width:48px;height:48px;background:#f7f7f7;border-radius:5px;box-shadow:0 0 1px #bbb}
        .d{position:absolute;left:50%;bottom:5px;width:9px;height:4px;margin-left:-4.500px;border-radius:2px;background:#8a8a8a}
        :host([active]) .d{width:20px;height:4px;margin-left:-10px;background:#0078d4}
        </style>
        <div class="tile"><app-icon name="${n}" size="${w}" height="${h}"></app-icon></div>
        ${this.hasAttribute('running')||this.hasAttribute('active')?'<div class="d"></div>':''}`;
    }
}
customElements.define('task-icon',TaskIcon);

class TaskBar extends HTMLElement{
    connectedCallback(){
        this.attachShadow({mode:'open'}).innerHTML=`<style>
        :host{display:flex;align-items:center;height:60px;flex:none;box-sizing:border-box;background:#eeeeee;border-top:1px solid #bcbcbc;font-family:"Noto Sans",sans-serif;color:#1a1a1a}
        .w{width:407px;flex:none;display:flex;align-items:center;box-sizing:border-box;padding-left:24px;gap:11px}
        .w div{font-size:14.500px;line-height:20px;white-space:nowrap}
        .w small{display:block;font-size:14.500px;color:#555}
        .start{width:55px;flex:none;display:flex;justify-content:center}
        .search{width:273px;height:38px;margin:0 3.500px 0 5px;flex:none;box-sizing:border-box;background:#fbfbfb;border:1px solid #e2e2e2;border-radius:19px;display:flex;align-items:center;padding:0 10px 0 11px;font-size:16px;color:#555}
        .search span{margin-left:9px}
        .search .gift{margin-left:auto}
        .tray{margin-left:21px;display:flex;align-items:center;flex:none}
        .ti{width:40px;display:flex;justify-content:center;flex:none}
        .tn{width:30px;display:flex;justify-content:center;flex:none}
        .tn.first{margin-left:4px}
        .clock{width:76px;margin-left:1px;text-align:right;font-size:15.300px;line-height:20px;flex:none;padding-right:1px}
        .bell{margin-left:8px;display:flex}
        </style>
        <div class="w"><app-icon name="weather" size="30"></app-icon><div>24°C<small>Haze</small></div></div>
        <div class="start"><app-icon name="windows" size="30"></app-icon></div>
        <div class="search"><app-icon name="search" size="22"></app-icon><span>Search</span><app-icon class="gift" name="gift" size="52" height="34"></app-icon></div>
        <task-icon name="copilot" w="30"></task-icon>
        <task-icon name="taskview" w="30"></task-icon>
        <task-icon name="m365" w="27"></task-icon>
        <task-icon name="teams" w="35"></task-icon>
        <task-icon name="mail" w="30"></task-icon>
        <task-icon name="edge" w="30"></task-icon>
        <task-icon name="todo" w="30"></task-icon>
        <task-icon name="chrome" w="30"></task-icon>
        <task-icon name="folder" w="30" running></task-icon>
        <task-icon name="whatsapp" w="30" running></task-icon>
        <task-icon name="spotify" w="29" running></task-icon>
        <task-icon name="excel" w="28" running></task-icon>
        <task-icon name="chromeavatar" w="36" running></task-icon>
        <task-icon name="cslogo" w="30" active></task-icon>
        <div class="tray">
          <div class="ti"><app-icon name="up" size="22"></app-icon></div>
          <div class="ti"><app-icon name="shield" size="20" height="22"></app-icon></div>
          <div class="ti"><app-icon name="square" size="20"></app-icon></div>
          <div class="ti"><app-icon name="cloud" size="21"></app-icon></div>
          <div class="tn first"><app-icon name="wifi" size="21"></app-icon></div>
          <div class="tn"><app-icon name="speaker" size="20" height="22"></app-icon></div>
          <div class="tn"><app-icon name="battery" size="21"></app-icon></div>
          <div class="clock">1:56 PM<br>2/8/2024</div>
          <div class="bell"><app-icon name="bell" size="21" height="23"></app-icon></div>
        </div>`;
    }
}
customElements.define('task-bar',TaskBar);
</script>
</body>
</html>
